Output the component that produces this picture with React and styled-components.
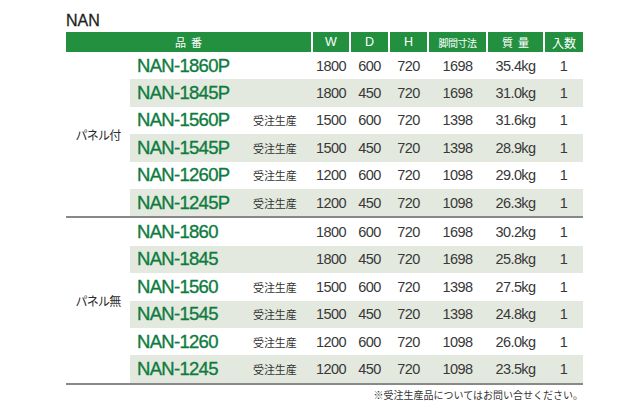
import React from 'react';
import styled, { createGlobalStyle } from 'styled-components';

const GlobalStyle = createGlobalStyle`
  html, body {
    margin: 0;
    padding: 0;
    background: #ffffff;
  }
  body {
    font-family: "Liberation Sans", Arial, "Noto Sans CJK JP", sans-serif;
    color: #333333;
  }
`;

const GREEN = '#22903f';
const SHADE = '#e4e9df';

// column widths of the body rows, lined up under the header cells
const BODY_COLS = '120px 62px 38px 39px 39px 59px 57px 39px';

const Page = styled.div`
  width: 640px;
  height: 410px;
  padding-left: 66px;
  box-sizing: border-box;
  overflow: hidden;
`;

const Title = styled.div`
  padding-top: 13px;
  margin-bottom: 3px;
  font-size: 16px;
  line-height: 16px;
  font-weight: 400;
  color: #1e1e1e;
  -webkit-text-stroke: 0.3px #1e1e1e;
`;

const Table = styled.div`
  width: 517px;
`;

const HeaderRow = styled.div`
  display: grid;
  grid-template-columns: 245px 36px 37px 37px 57px 55px 38px;
  column-gap: 2px;
`;

const HeadCell = styled.div`
  height: 20px;
  background: ${GREEN};
  color: #ffffff;
  display: flex;
  align-items: center;
  justify-content: center;
  font-family: "Liberation Sans", "Noto Sans CJK JP", sans-serif;
  font-size: ${(p) => p.$size || 11}px;
  letter-spacing: ${(p) => p.$spacing || 0}px;
  padding-left: ${(p) => p.$spacing || 0}px;
`;

const Section = styled.div`
  display: flex;
  border-bottom: 2px solid #888888;
`;

const GroupLabel = styled.div`
  width: 64px;
  flex: none;
  display: flex;
  align-items: center;
  justify-content: center;
  font-family: "Noto Sans CJK JP", sans-serif;
  font-size: 12px;
  color: #2a2a2a;
  letter-spacing: -0.8px;
`;

const Rows = styled.div`
  flex: 1;
`;

const Row = styled.div`
  display: grid;
  grid-template-columns: ${BODY_COLS};
  height: 27.4px;
  align-items: center;
  background: ${(p) => (p.$shaded ? SHADE : 'transparent')};
`;

const Model = styled.div`
  padding-left: 7px;
  font-family: "Liberation Sans", Arial, sans-serif;
  font-size: 18.5px;
  letter-spacing: -0.7px;
  color: #0f7c3f;
  -webkit-text-stroke: 0.35px #0f7c3f;
  white-space: nowrap;
`;

const Note = styled.div`
  padding-left: 3px;
  font-family: "Noto Sans CJK JP", sans-serif;
  font-size: 11px;
  color: #333333;
  letter-spacing: -0.1px;
  white-space: nowrap;
`;

const Num = styled.div`
  text-align: center;
  font-family: "Liberation Sans", Arial, sans-serif;
  font-size: 14.5px;
  letter-spacing: -0.6px;
  color: #383838;
  white-space: nowrap;
`;

const Footnote = styled.div`
  width: 517px;
  text-align: right;
  margin-top: 3px;
  font-family: "Noto Sans CJK JP", sans-serif;
  font-size: 10px;
  line-height: 14px;
  color: #333333;
`;

const groups = [
  {
    label: 'パネル付',
    rows: [
      ['NAN-1860P', '', 1800, 600, 720, 1698, '35.4kg', 1],
      ['NAN-1845P', '', 1800, 450, 720, 1698, '31.0kg', 1],
      ['NAN-1560P', '受注生産', 1500, 600, 720, 1398, '31.6kg', 1],
      ['NAN-1545P', '受注生産', 1500, 450, 720, 1398, '28.9kg', 1],
      ['NAN-1260P', '受注生産', 1200, 600, 720, 1098, '29.0kg', 1],
      ['NAN-1245P', '受注生産', 1200, 450, 720, 1098, '26.3kg', 1],
    ],
  },
  {
    label: 'パネル無',
    rows: [
      ['NAN-1860', '', 1800, 600, 720, 1698, '30.2kg', 1],
      ['NAN-1845', '', 1800, 450, 720, 1698, '25.8kg', 1],
      ['NAN-1560', '受注生産', 1500, 600, 720, 1398, '27.5kg', 1],
      ['NAN-1545', '受注生産', 1500, 450, 720, 1398, '24.8kg', 1],
      ['NAN-1260', '受注生産', 1200, 600, 720, 1098, '26.0kg', 1],
      ['NAN-1245', '受注生産', 1200, 450, 720, 1098, '23.5kg', 1],
    ],
  },
];

export default function App() {
  return (
    <>
      <GlobalStyle />
      <Page>
        <Title>NAN</Title>
        <Table>
          <HeaderRow>
            <HeadCell $size={11} $spacing={5}>品番</HeadCell>
            <HeadCell $size={12.5}>W</HeadCell>
            <HeadCell $size={12.5}>D</HeadCell>
            <HeadCell $size={12.5}>H</HeadCell>
            <HeadCell $size={10} $spacing={-0.5}>脚間寸法</HeadCell>
            <HeadCell $size={11} $spacing={5}>質量</HeadCell>
            <HeadCell $size={12}>入数</HeadCell>
          </HeaderRow>
          {groups.map((g) => (
            <Section key={g.label}>
              <GroupLabel>{g.label}</GroupLabel>
              <Rows>
                {g.rows.map((r, i) => (
                  <Row key={r[0]} $shaded={i % 2 === 1}>
                    <Model>{r[0]}</Model>
                    <Note>{r[1]}</Note>
                    <Num>{r[2]}</Num>
                    <Num>{r[3]}</Num>
                    <Num>{r[4]}</Num>
                    <Num>{r[5]}</Num>
                    <Num>{r[6]}</Num>
                    <Num>{r[7]}</Num>
                  </Row>
                ))}
              </Rows>
            </Section>
          ))}
        </Table>
        <Footnote>※受注生産品についてはお問い合せください。</Footnote>
      </Page>
    </>
  );
}
